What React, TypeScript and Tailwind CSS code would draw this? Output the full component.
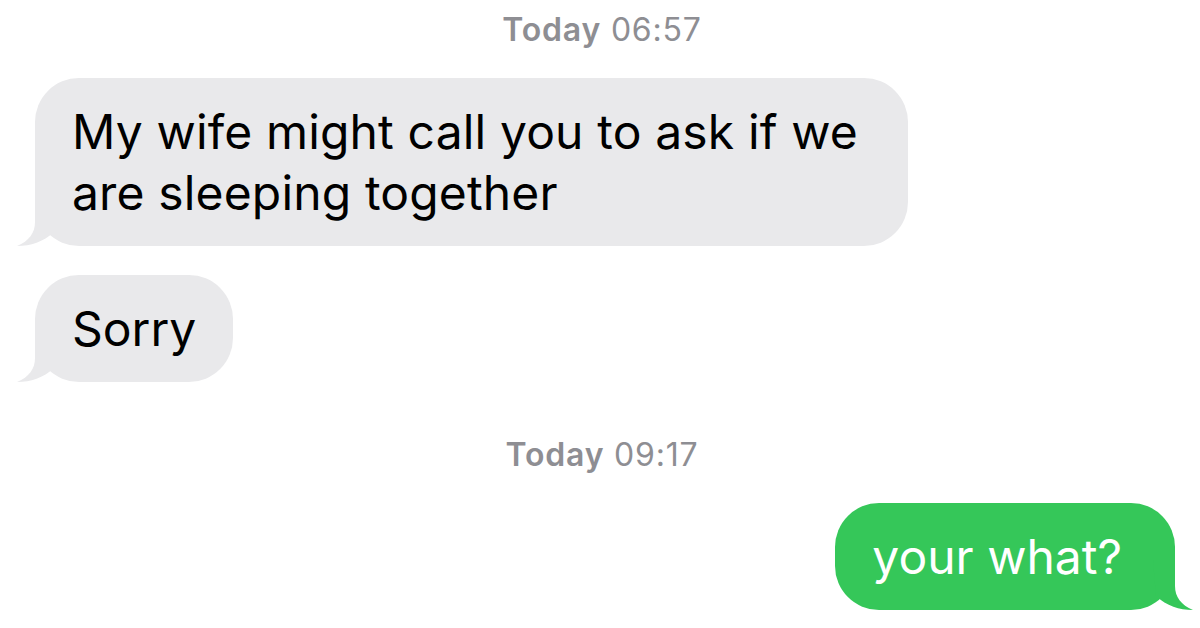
const font = { fontFamily: "Inter, 'Liberation Sans', sans-serif" };

// bubble tail: body edge sits at x=18 of the box, tip at bottom-left
function Tail({ color, side }: { color: string; side: "left" | "right" }) {
  return (
    <svg
      width="50"
      height="50"
      viewBox="0 0 50 50"
      className={
        side === "left"
          ? "absolute bottom-0 -left-[18px]"
          : "absolute bottom-0 -right-[18px] -scale-x-100"
      }
    >
      <path d="M18 0 V26 C18 37 12 45 0 50 C14 50 26 46 37 36 L40 0 Z" fill={color} />
    </svg>
  );
}

function Stamp({ time, className }: { time: string; className: string }) {
  return (
    <div
      className={`text-center text-[32px] leading-[36px] tracking-[0.8px] text-[#8e8e93] ${className}`}
      style={font}
    >
      <span className="font-semibold">Today</span> {time}
    </div>
  );
}

function Received({ children, className }: { children: React.ReactNode; className: string }) {
  return (
    <div
      className={`relative self-start ml-[35px] rounded-[44px] bg-[#e9e9eb] pl-[37px] py-[23px] text-[48px] leading-[61px] text-black ${className}`}
      style={font}
    >
      <Tail color="#e9e9eb" side="left" />
      <div className="relative">{children}</div>
    </div>
  );
}

export default function App() {
  return (
    <div className="flex h-[628px] w-[1200px] flex-col overflow-hidden bg-white pt-[12px]">
      <Stamp time="06:57" className="pl-[4px]" />
      <Received className="mt-[30px] pr-[50px] tracking-[0.15px]">
        My wife might call you to ask if we
        <br />
        are sleeping together
      </Received>
      <Received className="mt-[29px] pr-[37px]">Sorry</Received>
      <Stamp time="09:17" className="mt-[55px] pl-[4px]" />
      <div
        className="relative self-end mr-[25px] mt-[30px] rounded-[44px] bg-[#35c759] pl-[37px] pr-[53px] py-[23px] text-[48px] leading-[61px] text-white"
        style={font}
      >
        <Tail color="#35c759" side="right" />
        <div className="relative">your what?</div>
      </div>
    </div>
  );
}
